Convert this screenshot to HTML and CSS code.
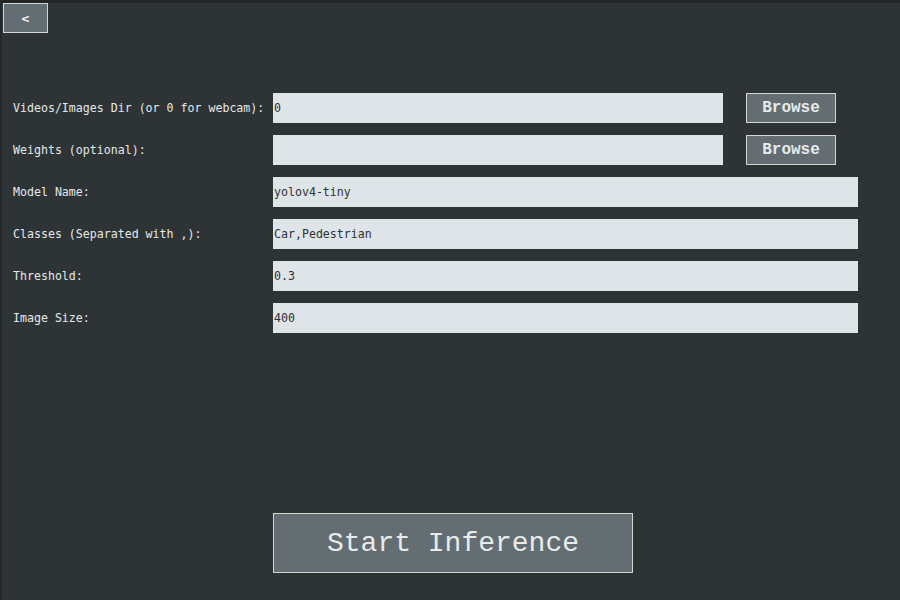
FILE: index.html
```html
<!DOCTYPE html>
<html>
<head>
<meta charset="utf-8">
<link rel="stylesheet" href="styles.css">
</head>
<body>
<div class="page">
  <button class="back">&lt;</button>
  <div class="form">
    <label class="lbl">Videos/Images Dir (or 0 for webcam):</label>
    <div class="field">0</div>
    <span></span>
    <button class="browse">Browse</button>

    <label class="lbl">Weights (optional):</label>
    <div class="field"></div>
    <span></span>
    <button class="browse">Browse</button>

    <label class="lbl">Model Name:</label>
    <div class="field wide">yolov4-tiny</div>

    <label class="lbl">Classes (Separated with ,):</label>
    <div class="field wide">Car,Pedestrian</div>

    <label class="lbl">Threshold:</label>
    <div class="field wide">0.3</div>

    <label class="lbl">Image Size:</label>
    <div class="field wide">400</div>
  </div>
  <div class="actions">
    <button class="start">Start Inference</button>
  </div>
</div>
</body>
</html>
```
FILE: styles.css
```css
html, body {
  margin: 0;
  padding: 0;
  background: #2e3436;
  width: 900px;
  height: 600px;
  overflow: hidden;
}
.page {
  box-sizing: border-box;
  width: 900px;
  height: 600px;
  border-top: 3px solid #222627;
  border-left: 2px solid #25292b;
  padding: 0 0 0 1px;
  font-family: "DejaVu Sans Mono", monospace;
}
.back {
  display: block;
  box-sizing: border-box;
  width: 45px;
  height: 30px;
  margin: 0;
  padding: 0;
  background: #646e72;
  border: 1px solid #d3d7cf;
  color: #eef2f2;
  font-family: "DejaVu Sans Mono", monospace;
  font-weight: bold;
  font-size: 13px;
}
.form {
  margin-top: 60px;
  margin-left: 10px;
  display: grid;
  grid-template-columns: 260px 450px 23px 90px 22px;
  grid-auto-rows: 30px;
  row-gap: 12px;
}
.lbl {
  grid-column: 1;
  align-self: center;
  color: #e4e8e9;
  font-size: 11.6px;
  white-space: nowrap;
}
.field {
  grid-column: 2;
  background: #dee4e7;
  color: #2e3436;
  font-size: 11.6px;
  line-height: 30px;
  padding-left: 1px;
  white-space: nowrap;
}
.field.wide {
  grid-column: 2 / 6;
}
.browse {
  grid-column: 4;
  box-sizing: border-box;
  margin: 0;
  padding: 0;
  background: #646e72;
  border: 1px solid #d3d7cf;
  color: #e6ebeb;
  font-family: "Courier New", "Nimbus Mono PS", "FreeMono", "Liberation Mono", monospace;
  font-weight: bold;
  font-size: 16px;
}
.actions {
  margin-top: 180px;
  padding-left: 270px;
}
.start {
  box-sizing: border-box;
  width: 360px;
  height: 60px;
  margin: 0;
  padding: 0;
  background: #646e72;
  border: 1px solid #d3d7cf;
  color: #e6ebeb;
  font-family: "Courier New", "Nimbus Mono PS", "FreeMono", "Liberation Mono", monospace;
  font-size: 28px;
}
```
